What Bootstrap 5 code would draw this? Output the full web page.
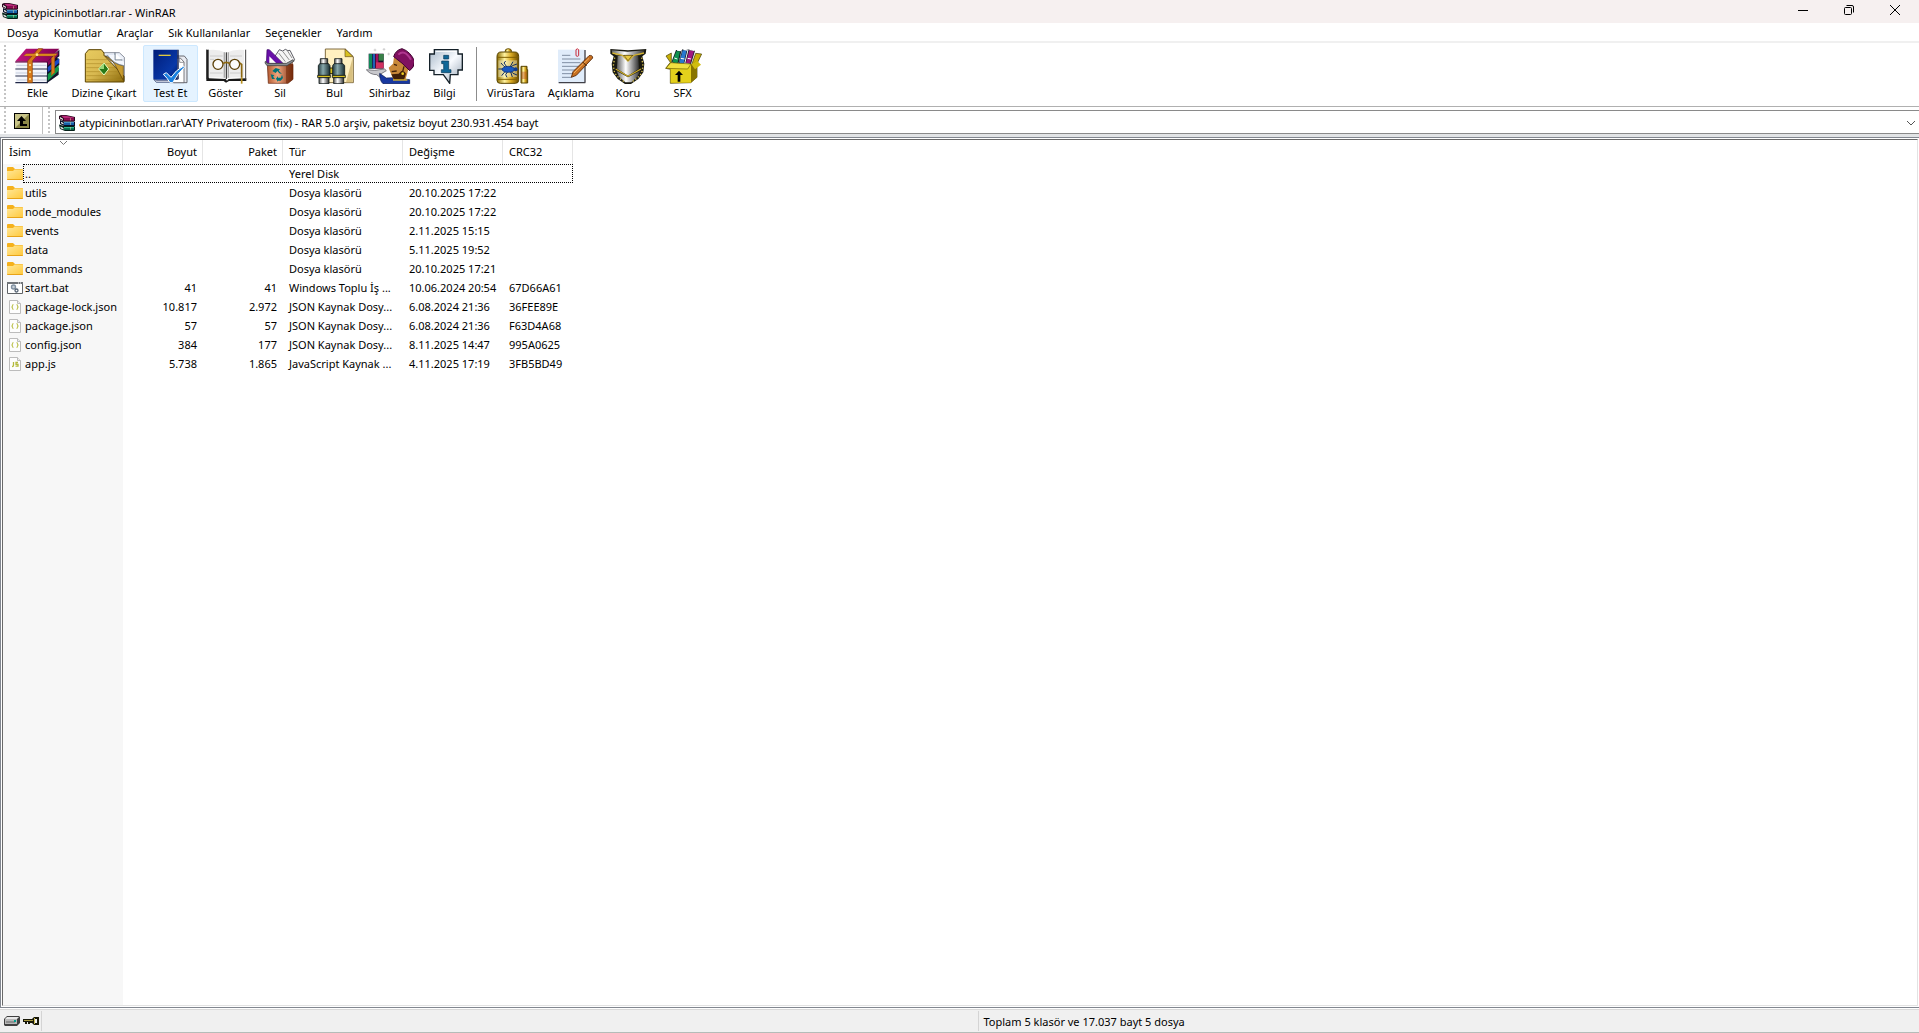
<!DOCTYPE html>
<html lang="tr">
<head>
<meta charset="utf-8">
<meta name="viewport" content="width=device-width, initial-scale=1">
<title>atypicininbotları.rar - WinRAR</title>
<link href="https://cdn.jsdelivr.net/npm/bootstrap@5.3.0/dist/css/bootstrap.min.css" rel="stylesheet">
<style>
  body { font-family: "Noto Sans", "Open Sans", sans-serif; font-size: 11px; line-height: 18px; color: #000; background: #fff; }
  svg { display: block; flex: none; }
  button, select { font: inherit; color: inherit; }
  .title-bar { height: 23px; background: #f6f0f0; padding: 0 1px 0 2px; gap: 6px; }
  .title-bar h1 { font-size: inherit; line-height: 18px; font-weight: 400; }
  .title-icon { margin-top: 3px; }
  .win-btn { width: 46px; height: 23px; border: 0; background: none; padding: 0 0 3px; display: flex; align-items: center; justify-content: center; }
  .menu-bar { height: 20px; border-bottom: 2px solid #f0f0f0; padding-left: 7px; gap: 15px; }
  .menu-bar a { color: #000; text-decoration: none; line-height: 20px; }
  .grip { width: 2px; background: repeating-linear-gradient(#c4c4c4 0 2px, #fff 2px 4px); }
  .tool-bar { height: 64px; border-bottom: 1px solid #b0b0b0; padding: 2px 0 4px 4px; }
  .tool-btn { width: 55px; border: 1px solid transparent; border-radius: 2px; background: none; padding: 2px 0 0; display: flex; flex-direction: column; align-items: center; white-space: nowrap; }
  .tool-btn.hot { background: #e5f3ff; border-color: #cce8ff; }
  .tool-wide { width: 78px; }
  .tool-slim { width: 54px; }
  .tool-mid { width: 60px; }
  .tool-sep { width: 1px; background: #8c8c8c; margin: 2px 4px 1px; }
  .address-bar { height: 30px; border-bottom: 3px solid #e2e4e6; padding-left: 4px; }
  .address-grip { margin: 0 5px; }
  .up-btn { border: 0; background: none; padding: 0; }
  .address-box { border: 1px solid #8a8a8a; border-right: 0; margin-top: 3px; height: 24px; padding: 1px 3px 0; }
  .address-box select { appearance: none; border: 0; background: none; outline: 0; padding: 0; }
  .file-pane { border: 1px solid #828790; border-right: 0; padding: 1px; }
  .file-list { border: 1px solid #696969; border-right-color: #e3e3e3; border-bottom-color: #e3e3e3; overflow: hidden;
    background: linear-gradient(#f7f7f7, #f7f7f7) 0 24px / 120px 100% no-repeat; }
  .file-table { table-layout: fixed; width: 570px; border-collapse: separate; border-spacing: 0; }
  .file-table th { height: 24px; font-weight: 400; border-right: 1px solid #e5e5e5; padding: 0 5px 0 6px; position: relative; }
  .file-table td { height: 19px; line-height: 19px; padding: 0 6px; white-space: nowrap; overflow: hidden; text-overflow: clip; }
  .file-table td:first-child { padding: 0 0 0 4px; }
  .file-name { padding-left: 2px; }
  .sort-mark { position: absolute; left: 57px; top: 1px; }
  .focus-row { position: relative; }
  .focus-row::after { content: ""; position: absolute; left: 20px; top: 0; right: 0; bottom: 0; border: 1px dotted #000; }
  .status-bar { height: 24px; background: #f0f0f0; border-top: 1px solid #d9d9d9; border-bottom: 1px solid #b4bcb8; padding: 1px 0; margin-top: 1px; line-height: 22px; }
  .status-cell { border-right: 1px solid #d4d4d4; }
  .status-part { flex: 1 1 0; }
  .status-text { padding-left: 5px; }
  .status-icons { width: 42px; padding-left: 4px; gap: 3px; }
</style>
<script src="https://cdn.jsdelivr.net/npm/bootstrap@5.3.0/dist/js/bootstrap.bundle.min.js"></script>
</head>
<body>
<svg width="0" height="0" class="position-absolute" aria-hidden="true">
  <defs>
    <linearGradient id="gold" x1="0" x2="1"><stop offset="0" stop-color="#8a6a00"/><stop offset=".35" stop-color="#fff3a0"/><stop offset=".65" stop-color="#d8a820"/><stop offset="1" stop-color="#6a4a00"/></linearGradient>
    <linearGradient id="folderGold" x1="0" x2="1" y2="1"><stop offset="0" stop-color="#e8cc60"/><stop offset=".5" stop-color="#d8b850"/><stop offset="1" stop-color="#8a6808"/></linearGradient>
    <linearGradient id="magenta" x1="0" x2="1"><stop offset="0" stop-color="#c0187c"/><stop offset="1" stop-color="#800050"/></linearGradient>
    <linearGradient id="navy" x1="0" x2="1" y2="1"><stop offset="0" stop-color="#001c78"/><stop offset=".7" stop-color="#0838a8"/><stop offset="1" stop-color="#001860"/></linearGradient>
    <linearGradient id="copper" x1="0" x2="1"><stop offset="0" stop-color="#b05830"/><stop offset=".4" stop-color="#f0a880"/><stop offset="1" stop-color="#7c2c10"/></linearGradient>
    <linearGradient id="steel" x1="0" x2="1"><stop offset="0" stop-color="#606060"/><stop offset=".4" stop-color="#fff"/><stop offset="1" stop-color="#303030"/></linearGradient>
    <linearGradient id="teal" x1="0" x2="1"><stop offset="0" stop-color="#243c40"/><stop offset=".4" stop-color="#88a8ac"/><stop offset="1" stop-color="#182c30"/></linearGradient>
    <linearGradient id="silver" x2="1" y2="1"><stop offset="0" stop-color="#a8b8c8"/><stop offset=".5" stop-color="#f8fbff"/><stop offset="1" stop-color="#90a0b0"/></linearGradient>
    <linearGradient id="folderSmall" x2="1" y2="1"><stop offset="0" stop-color="#ffe89a"/><stop offset="1" stop-color="#ffc83a"/></linearGradient>
    <symbol id="books" viewBox="0 0 16 16">
      <path d="M0 1l2-1h5l9 2v4l-1 .5H5L0 4z" fill="#28081c"/><path d="M2 .8h5l8 1.700v.7H5z" fill="#b82878"/><path d="M5 3.200h10v2.300H5z" fill="#900c54"/><path d="M1 2l3 1.700v1.300L1 3.500z" fill="#e8e8e8"/>
      <path d="M1 5l4 1.500h10l1 .5v4H5L1 9z" fill="#081028"/><path d="M5 7.200h10v2.800H5z" fill="#1860a8"/><path d="M5 7.200h10v.8H5z" fill="#50a0d8"/><path d="M2 6.700l2.500 1.300v1.500L2 8.300z" fill="#e8e8e8"/>
      <path d="M0 9.500l5 1.500h10l1 .5v4l-1 .5H6l-5-2z" fill="#042018"/><path d="M5 12h10v2.800H5z" fill="#0c7858"/><path d="M5 12h10v.8H5z" fill="#40c8a0"/><path d="M1.500 11.500l3 1.500v1.500l-3-1.300z" fill="#e8e8e8"/>
      <path d="M11 3.200h1v2.300h-1zM11 7.200h1V10h-1zM11 12h1v2.800h-1z" fill="#e8e0a0" opacity=".5"/>
    </symbol>
    <symbol id="folder" viewBox="0 0 16 16">
      <path d="M0 2q0-1 1-1h5l2 2h7q1 0 1 1v5H0z" fill="#f5b11c"/><path d="M0 5h6l1.500-1.500H15q1 0 1 1V13q0 1-1 1H1q-1 0-1-1z" fill="url(#folderSmall)"/><path d="M0 13h16q0 1-1 1H1q-1 0-1-1z" fill="#e8a317"/>
    </symbol>
    <symbol id="json" viewBox="0 0 16 16">
      <path d="M2.500 1.500h8l3 3v10h-11z" fill="#fdfdfd" stroke="#bcbcbc"/><path d="M10.500 1.500v3h3" fill="#eee" stroke="#bcbcbc"/><path d="M6.500 5.500q-1 0-1 1.200t-1 1.300q1 .2 1 1.300t1 1.200M9.500 5.500q1 0 1 1.200t1 1.300q-1 .2-1 1.300t-1 1.200" fill="none" stroke="#bfc456" stroke-width="1.200"/>
    </symbol>
    <symbol id="script" viewBox="0 0 16 16">
      <path d="M2.500 1.500h8l3 3v10h-11z" fill="#fdfdfd" stroke="#bcbcbc"/><path d="M10.500 1.500v3h3" fill="#eee" stroke="#bcbcbc"/><path d="M6.500 6v3.500q0 1-1.500 1M11 6.500H9v1.800h2v1.900H8.500" fill="none" stroke="#b4ba3c" stroke-width="1.300"/>
    </symbol>
    <symbol id="batch" viewBox="0 0 16 16">
      <path d="M.5 2.500h15v11H.5z" fill="#fff" stroke="#606468"/><path d="M0 2h16v2H0z" fill="#707478"/><path d="M11 2.500h1v1h-1zM13 2.500h1v1h-1z" fill="#fff"/><circle cx="6.500" cy="7" r="2" fill="#c8d0d8" stroke="#8090a0" stroke-width="1.400"/><circle cx="9.500" cy="10.500" r="1.500" fill="#fff" stroke="#566474" stroke-width="1.300"/>
    </symbol>
  </defs>
</svg>

<div class="vh-100 d-flex flex-column">
  <header class="title-bar d-flex">
    <svg width="16" height="16" class="title-icon"><use href="#books"/></svg>
    <h1 class="m-0 flex-grow-1 pt-1">atypicininbotları.rar - WinRAR</h1>
    <div class="d-flex">
      <button class="win-btn" aria-label="Simge durumuna küçült"><svg width="10" height="10"><path d="M0 5.500h10" stroke="#000"/></svg></button>
      <button class="win-btn" aria-label="Önceki boyut"><svg width="10" height="10" fill="none" stroke="#000"><rect x=".5" y="2.500" width="7" height="7" rx="1"/><path d="M2.500 .5H8q1.500 0 1.500 1.500v5.500"/></svg></button>
      <button class="win-btn" aria-label="Kapat"><svg width="10" height="10"><path d="M0 0l10 10M10 0L0 10" stroke="#000"/></svg></button>
    </div>
  </header>

  <nav class="menu-bar d-flex">
    <a href="#">Dosya</a><a href="#">Komutlar</a><a href="#">Araçlar</a><a href="#">Sık Kullanılanlar</a><a href="#">Seçenekler</a><a href="#">Yardım</a>
  </nav>

  <div class="tool-bar d-flex" role="toolbar">
    <div class="grip me-1"></div>
    <button class="tool-btn">
      <svg width="48" height="36" viewBox="41 143 144 108">
        <path d="M140 182l37-34v20l-7 5 7 3v18l-8 6 6 3v20l-36 26z" fill="#10142c"/>
        <path d="M142 184l32-32v12l-32 33z" fill="#8c0858"/><path d="M142 201l34-27v14l-34 28z" fill="#1848c8"/><path d="M142 222l33-27v16l-33 31z" fill="#109848"/>
        <path d="M45 183l32-38h100l-36 40z" fill="url(#magenta)"/><path d="M45 183h96v4H45z" fill="#680848"/>
        <path d="M48 187h90v17H48zM45 209h94v16H45zM48 230h90v16H48z" fill="#f4f6fc"/>
        <path d="M48 195h90M46 218h92M48 239h90" stroke="#c4ccdc" stroke-width="3"/>
        <path d="M45 206h98M45 227h98M45 247h98" stroke="#202848" stroke-width="3.500"/>
        <path d="M82 182l32-37h13l-31 37v65H82z" fill="#d87818" stroke="#884000" stroke-width="2"/>
        <path d="M77 160h94l-6 7H70z" fill="#e08c20" stroke="#905000"/><path d="M153 173l10-9v52l-10 10z" fill="#d87818" stroke="#884000"/>
        <g fill="#ffe890"><circle cx="89" cy="194" r="3"/><circle cx="89" cy="215" r="3"/><circle cx="89" cy="236" r="3"/><circle cx="110" cy="163" r="4"/></g>
      </svg>Ekle</button>
    <button class="tool-btn tool-wide">
      <svg width="48" height="36" viewBox="240 143 144 108">
        <path d="M300 157h58l15 14v70h-73z" fill="#eef2fa" stroke="#505868" stroke-width="2"/><path d="M345 157v22h22" fill="#fff" stroke="#607080" stroke-width="2"/><path d="M318 163h22v8h-22zM352 182h13v24h-13z" fill="#b8c8e0"/>
        <path d="M256 160l10-12h38l8 10v7l60 62v18H256z" fill="url(#folderGold)" stroke="#5c4400" stroke-width="3"/>
        <path d="M259 178h62M259 190h74M259 202h86M259 214h98M259 226h108M259 238h112" stroke="#a88420" stroke-width="3" opacity=".55"/>
        <path d="M314 166q20 6 30 26l26 48v-44q-28-4-56-30z" fill="#c89c30" stroke="#503800" stroke-width="2"/>
        <path d="M296 206l16-18 14 18-14 18z" fill="#287818" stroke="#e8ffc0" stroke-width="3"/><path d="M296 206l16-18v18z" fill="#98d878"/>
        <path d="M322 164h24v14h14l12 6v12q-30-4-50-32z" fill="#f4f7fc"/><path d="M345 157v22h22M322 164q20 28 50 32" fill="none" stroke="#607080" stroke-width="2"/>
      </svg>Dizine Çıkart</button>
    <button class="tool-btn hot">
      <svg width="48" height="36" viewBox="440 143 144 108">
        <path d="M520 167h32l8 10v70h-40z" fill="#e8eaf0" stroke="#505058" stroke-width="2.500"/><path d="M508 173h32l11 12v62h-43z" fill="#fff" stroke="#606068" stroke-width="2.500"/><path d="M538 173v13h12" fill="none" stroke="#606068" stroke-width="2"/>
        <path d="M459 148h72v90h-68l-4-3z" fill="url(#navy)"/><path d="M531 148h4v88l-4 3z" fill="#000c40"/><path d="M460 237l8 9h50v-6h-48z" fill="#d8dce8" stroke="#203060" stroke-width="2"/>
        <path d="M475 165h36" stroke="#e0c840" stroke-width="4"/>
        <path d="M489 222l9-5 14 14q14-22 38-34l2 4q-20 18-35 46h-8q-8-14-20-25z" fill="#1880e0" stroke="#fff" stroke-width="3"/>
      </svg>Test Et</button>
    <button class="tool-btn">
      <svg width="48" height="36" viewBox="604 143 144 108">
        <path d="M617 148h8v86l50 2 4 5 5-5 53-2v8h-52l-9 5-7-5h-52z" fill="#181818"/><path d="M624 149q28-4 52 8v78q-24-7-52-3zM730 149q-28-4-53 8v78q24-7 53-3z" fill="#ededed"/>
        <path d="M618 148v88M735 148v90" stroke="#404040" stroke-width="3"/><path d="M677 156v80" stroke="#202020" stroke-width="3"/><path d="M671 156v76M683 156v76" stroke="#aaa" stroke-width="4"/>
        <path d="M628 167h38M628 177h12M628 218h38M688 167h36M688 218h32" stroke="#ccc" stroke-width="3"/>
        <g fill="#fff" fill-opacity=".8" stroke="#5c4008" stroke-width="4"><circle cx="652" cy="192" r="15"/><circle cx="702" cy="192" r="15"/></g><path d="M667 190q10-8 20 0M717 188l6 4v40" fill="none" stroke="#8c6810" stroke-width="5"/><path d="M723 232v18" stroke="#b89020" stroke-width="5"/>
      </svg>Göster</button>
    <button class="tool-btn tool-slim">
      <svg width="48" height="36" viewBox="768 143 144 108">
        <path d="M822 172l16-24 10 4 8-5 8 4 6-1 14 28-26 16h-30z" fill="#f4f4f4" stroke="#404048" stroke-width="2.500"/><path d="M836 158l20 26M848 153l20 26M862 151l14 22" stroke="#909090" stroke-width="3"/>
        <path d="M799 190l2-42h7l42 42z" fill="#6810a8" stroke="#380060" stroke-width="2"/><path d="M808 168l20 20h-20z" fill="#fff"/>
        <path d="M802 192h77v45l-15 12h-59z" fill="url(#copper)" stroke="#602008" stroke-width="2"/><path d="M858 192l21-8v53l-15 12h-6z" fill="#702808" opacity=".55"/>
        <path d="M796 183l7 6h56l20-11 4 4-22 14h-60l-6-8z" fill="#888c90" stroke="#303030" stroke-width="2"/>
        <path d="M817 212l10-9 13 4-4 4 10 10-8-2-6-7-5 6zM812 222l11 3-4 4 6 7h-9zM828 235l6-8v5h9l3-9 3 10-7 8h-8v4z" fill="#007478"/>
      </svg>Sil</button>
    <button class="tool-btn">
      <svg width="48" height="36" viewBox="919 143 144 108">
        <path d="M962 146h60l24 23v78h-84z" fill="#fff0c0" stroke="#685020" stroke-width="2.500"/><path d="M1044 172v74h-20z" fill="#d8c080"/><path d="M1021 146v23h24z" fill="#d8c020" stroke="#685020" stroke-width="2"/>
        <path d="M970 203h30v17h-30z" fill="#d8c020" stroke="#302800" stroke-width="3"/>
        <g stroke="#101818" stroke-width="2.500"><path d="M947 175h22v18h-22z" fill="url(#steel)"/><path d="M941 196l4-6h27l4 6v31h-35z" fill="url(#teal)"/><path d="M939 225h38v7h-38z" fill="#d8c020"/><path d="M943 232h30v18h-30z" fill="url(#steel)"/>
        <path d="M990 175h22v18h-22z" fill="url(#steel)"/><path d="M984 196l4-6h27l5 6v31h-36z" fill="url(#teal)"/><path d="M983 225h39v7h-39z" fill="#d8c020"/><path d="M987 232h30v18h-30z" fill="url(#steel)"/></g>
      </svg>Bul</button>
    <button class="tool-btn">
      <svg width="48" height="36" viewBox="16 23 144 108">
        <path d="M24 40h45v45H24z" fill="#181028"/><path d="M25 41h9v43h-9z" fill="#108858"/><path d="M36 41h7v43h-7z" fill="#2060b8"/><path d="M45 41h8v43h-8z" fill="#a01060"/><path d="M54 41h15v20H54z" fill="#388048"/><path d="M46 66h23v18H46z" fill="#d03060"/>
        <path d="M17 88l25 2 30-4 5 5-20 12 6 12-15-12q-20 0-31-15z" fill="#c8c8cc" stroke="#505058" stroke-width="2"/>
        <path d="M57 99l20 14 22-1 48 6v12H67q-10-8-10-31z" fill="#1838a0" stroke="#081850" stroke-width="2"/>
        <path d="M100 51l44 30-4 18-6 20H99L89 96l-5-14 13-12z" fill="#c88838"/><path d="M122 92q10-2 14 8l-6 18h-30l-8-16 22-2z" fill="#402008"/><path d="M100 72l9 3M93 94l15-2M130 78l-4 16" stroke="#402008" stroke-width="4"/><circle cx="126" cy="100" r="4" fill="#f0d020"/>
        <path d="M99 49q6-20 25-24 25 8 38 38-2 20-15 28-22-24-48-42z" fill="#801060" stroke="#400030" stroke-width="3"/><path d="M113 43q18-18 38 15" fill="none" stroke="#b03890" stroke-width="6"/>
        <path d="M97 119h43" stroke="#d8b830" stroke-width="4"/><g stroke="#bcbcbc" stroke-width="2"><path d="M43 25v8M39 29h8M70 23v8M66 27h8M84 37v8M80 41h8"/></g>
      </svg>Sihirbaz</button>
    <button class="tool-btn">
      <svg width="48" height="36" viewBox="180 23 144 108">
        <path d="M220 28h71v13h13v48h-13v14h-23l-2 26-19-26h-28V90h-13V41h14z" fill="url(#silver)" stroke="#142028" stroke-width="4"/><path d="M224 33h62" stroke="#fff" stroke-width="3"/>
        <path d="M248 45h15v11h-15zM242 62h21v26h7v9h-29v-9h7V70h-6z" fill="#106898" stroke="#083858" stroke-width="2"/>
      </svg>Bilgi</button>
    <div class="tool-sep"></div>
    <button class="tool-btn tool-mid">
      <svg width="48" height="36" viewBox="16 23 144 108">
        <path d="M70 34q0-9 10-9t10 9" fill="url(#gold)" stroke="#685000" stroke-width="3"/>
        <path d="M46 48q1-13 12-13h41q12 0 12 13v72q0 9-10 9H56q-10 0-10-9z" fill="url(#gold)" stroke="#584400" stroke-width="3"/><path d="M48 51h62M48 117h62" stroke="#806000" stroke-width="3"/>
        <path d="M50 60h56v50H50z" fill="#f0f0d8" opacity=".45"/>
        <path d="M58 68l7 8 10 8M72 62l-5 6 10 14M60 106l8-10 10-5M76 111l-4-8 8-12M50 86h20M94 64l-10 18M106 71l-14 5-8 8M106 104l-12-5-8-8M92 110l-6-18" fill="none" stroke="#102c60" stroke-width="3"/><ellipse cx="80" cy="87" rx="19" ry="9" fill="#1858c0" stroke="#082870" stroke-width="2"/><circle cx="102" cy="87" r="6" fill="#103c90"/>
        <path d="M118 78h18v10h2v40h-20z" fill="url(#gold)" stroke="#584400" stroke-width="3"/><path d="M119 94h16v22h-16z" fill="#b03020" opacity=".35"/>
      </svg>VirüsTara</button>
    <button class="tool-btn tool-mid">
      <svg width="48" height="36" viewBox="195 23 144 108">
        <path d="M228 28h80v99h-80z" fill="#e0ecfa"/><path d="M309 29v98M230 127h80" stroke="#404048" stroke-width="4"/>
        <path d="M240 45h25M240 56h55M240 67h55M240 78h50M240 89h42M240 100h32M240 111h28" stroke="#6c7c90" stroke-width="2.500"/>
        <path d="M282 28v18q4 4 8 0V28q-4-5-8 0z" fill="none" stroke="#c82838" stroke-width="3"/>
        <path d="M268 111l5-17 48-48q11-3 11 7l-49 52z" fill="#c87020" stroke="#502000" stroke-width="2.500"/><path d="M276 98l45-44" stroke="#f0b060" stroke-width="3"/><path d="M302 65l12 12" stroke="#402000" stroke-width="3"/>
      </svg>Açıklama</button>
    <button class="tool-btn tool-slim">
      <svg width="48" height="36" viewBox="367 23 144 108">
        <path d="M386 26l53 4 55-4-2 14-10 8 6 22-3 26-15 20-22 15h-18l-22-15-15-20-3-26 6-22-10-8z" fill="#181810"/>
        <path d="M390 30l48 4 50-4-2 7-12 8H405l-13-8z" fill="url(#steel)"/><path d="M408 47h62l2 38-33 21-33-21z" fill="url(#steel)"/>
        <path d="M405 92l34 19 36-19-8 17-18 17h-18l-19-17z" fill="url(#steel)"/><path d="M402 86l37 22 39-22" fill="none" stroke="#c8a828" stroke-width="4"/>
        <path d="M392 38l30 7 17 17 18-17 30-7" fill="none" stroke="#d0b030" stroke-width="4"/><path d="M427 45h25l-13 16z" fill="#e8c840" stroke="#604800" stroke-width="2"/>
        <path d="M399 52l-4 24 4 22 12 14 16 12M480 52l4 24-4 22-12 14-16 12" fill="none" stroke="#d8c050" stroke-width="4" stroke-dasharray="4 6"/>
      </svg>Koru</button>
    <button class="tool-btn">
      <svg width="48" height="36" viewBox="532 23 144 108">
        <path d="M569 66l14-37h17l-10 43zM591 70l11-43h16l-10 42zM611 68l10-42 19 5-12 40z" fill="#182028"/><path d="M572 64l12-31h11l-8 39z" fill="#109050"/><path d="M593 68l10-38h12l-9 38z" fill="#2878d0"/><path d="M613 68l10-39 14 4-11 36z" fill="#a01880"/><path d="M586 29l13 2M605 27l12 2M623 27l15 3" stroke="#fff" stroke-width="4"/><path d="M578 53l9 3M597 54l11 2M618 54l10 2" stroke="#fff" stroke-width="3"/>
        <path d="M553 47l16-9v31l61 4 12-34 18 2-14 29v41l-19 16-61 2V87l-14-3 14-18z" fill="#c8b008" stroke="#403800" stroke-width="2"/>
        <path d="M567 72h61v55h-61z" fill="#e4d01c"/><path d="M628 72l18-10v48l-18 17z" fill="#887400"/><path d="M553 84l14-17 61 4-10 15z" fill="#f0e040" stroke="#706000" stroke-width="2"/><path d="M629 72l17-11 12 12-18 14z" fill="#d0bc10"/>
        <path d="M592 91l12 13h-8v20h-8v-20h-8z" fill="#000"/>
      </svg>SFX</button>
  </div>

  <div class="address-bar d-flex">
    <div class="grip"></div>
    <button class="up-btn mx-2 d-flex align-items-center" aria-label="Bir üst klasör">
      <svg width="16" height="16"><rect width="16" height="16" fill="#000"/><rect x="1" y="1" width="14" height="14" fill="#c8c488"/><path d="M15 1v14H1z" fill="#8c8848"/><path d="M7.500 3L12 8H9v3h4v2H6V8H3z" fill="#000"/></svg>
    </button>
    <div class="vr ms-1"></div>
    <div class="grip address-grip"></div>
    <div class="address-box d-flex align-items-center flex-grow-1">
      <svg width="16" height="16"><use href="#books"/></svg>
      <select class="flex-grow-1 ms-1" aria-label="Adres"><option>atypicininbotları.rar\ATY Privateroom (fix) - RAR 5.0 arşiv, paketsiz boyut 230.931.454 bayt</option></select>
      <svg width="10" height="6" fill="none" stroke="#555"><path d="M1 1l4 4 4-4"/></svg>
    </div>
  </div>

  <main class="file-pane flex-grow-1 d-flex">
    <div class="file-list flex-grow-1">
      <table class="file-table">
        <colgroup><col style="width:120px"><col style="width:80px"><col style="width:80px"><col style="width:120px"><col style="width:100px"><col style="width:70px"></colgroup>
        <thead><tr><th>İsim<svg class="sort-mark" width="7" height="4" fill="none" stroke="#777"><path d="M0 0l3.500 3.500L7 0"/></svg></th><th class="text-end">Boyut</th><th class="text-end">Paket</th><th>Tür</th><th>Değişme</th><th>CRC32</th></tr></thead>
        <tbody id="rows"></tbody>
      </table>
    </div>
  </main>

  <footer class="status-bar d-flex">
    <div class="status-cell status-icons d-flex align-items-center">
      <svg width="16" height="10"><path d="M0 3l3-3h12l1 1v6l-3 3H1L0 9z" fill="#404040"/><path d="M1 3l2-2h12l-2 2z" fill="#e8e8e8"/><path d="M1 3h12v5H1z" fill="#b8b8b8"/><path d="M2 6h9" stroke="#666"/><path d="M10 4h2v2h-2z" fill="#00a090"/></svg>
      <svg width="16" height="8"><path d="M0 2h9l2-2h5v8h-5L9 6H7v1H5V5H4v2H2V5H0z" fill="#181808"/><path d="M1 3.500h9" stroke="#a89840"/><path d="M12 2h2v4h-2z" fill="#f0f0f0"/><path d="M11.500 1v6" stroke="#c8b850"/></svg>
    </div>
    <div class="status-cell status-part"></div>
    <div class="status-part status-text">Toplam 5 klasör ve 17.037 bayt 5 dosya</div>
  </footer>
</div>
<script>
const files = [
  ["folder", "..", "", "", "Yerel Disk", "", ""],
  ["folder", "utils", "", "", "Dosya klasörü", "20.10.2025 17:22", ""],
  ["folder", "node_modules", "", "", "Dosya klasörü", "20.10.2025 17:22", ""],
  ["folder", "events", "", "", "Dosya klasörü", "2.11.2025 15:15", ""],
  ["folder", "data", "", "", "Dosya klasörü", "5.11.2025 19:52", ""],
  ["folder", "commands", "", "", "Dosya klasörü", "20.10.2025 17:21", ""],
  ["batch", "start.bat", "41", "41", "Windows Toplu İş ...", "10.06.2024 20:54", "67D66A61"],
  ["json", "package-lock.json", "10.817", "2.972", "JSON Kaynak Dosy...", "6.08.2024 21:36", "36FEE89E"],
  ["json", "package.json", "57", "57", "JSON Kaynak Dosy...", "6.08.2024 21:36", "F63D4A68"],
  ["json", "config.json", "384", "177", "JSON Kaynak Dosy...", "8.11.2025 14:47", "995A0625"],
  ["script", "app.js", "5.738", "1.865", "JavaScript Kaynak ...", "4.11.2025 17:19", "3FB5BD49"]
];
document.getElementById("rows").innerHTML = files.map(([icon, name, size, packed, type, date, crc], i) =>
  `<tr${i ? "" : ' class="focus-row"'}><td><div class="d-flex align-items-center"><svg width="16" height="16"><use href="#${icon}"/></svg><span class="file-name">${name}</span></div></td>
  <td class="text-end">${size}</td><td class="text-end">${packed}</td><td>${type}</td><td>${date}</td><td>${crc}</td></tr>`).join("");
</script>
</body>
</html>
